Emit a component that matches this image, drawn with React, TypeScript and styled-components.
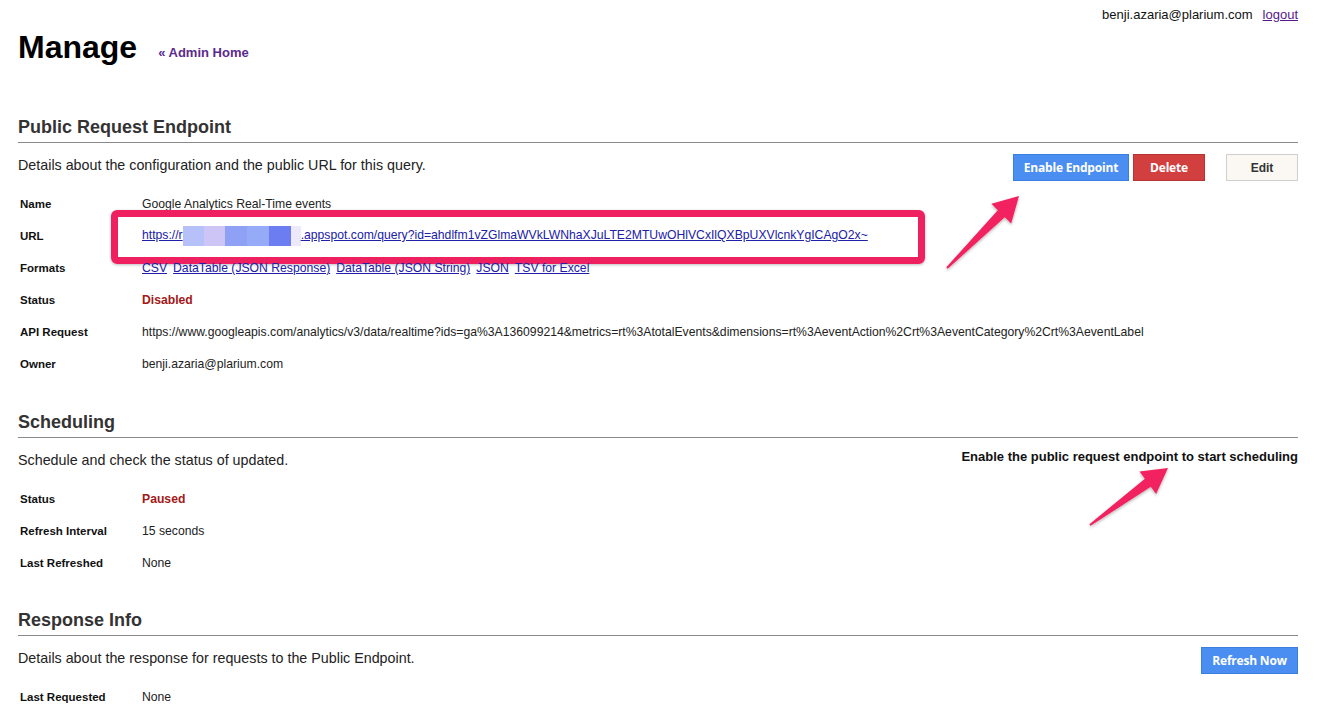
import React from "react";
import styled, { createGlobalStyle } from "styled-components";

const GlobalStyle = createGlobalStyle`
  *, *::before, *::after {
    box-sizing: border-box;
  }

  body {
    margin: 0;
    background: #fff;
    color: #222;
    font-family: "Liberation Sans", Arial, sans-serif;
  }
`;

const Page = styled.div`
  position: relative;
  width: 1324px;
  min-height: 708px;
  padding: 0 26px 0 18px;
  overflow: hidden;
`;

const TopBar = styled.div`
  display: flex;
  justify-content: flex-end;
  align-items: center;
  gap: 10px;
  height: 29px;
  font-size: 13px;
  color: #111;
`;

const VisitedLink = styled.a`
  color: #551a8b;
  text-decoration: underline;
`;

const TitleRow = styled.div`
  display: flex;
  align-items: baseline;
  gap: 21px;
`;

const PageTitle = styled.h1`
  margin: 0;
  font-size: 32px;
  line-height: 36px;
  font-weight: bold;
  color: #000;
`;

const AdminLink = styled.a`
  position: relative;
  top: -1px;
  color: #5b2a8e;
  font-size: 13px;
  font-weight: bold;
  text-decoration: none;
`;

const Section = styled.section<{ $top: number }>`
  margin-top: ${(p) => p.$top}px;
`;

const SectionTitle = styled.h2`
  margin: 0;
  font-size: 18px;
  line-height: 22px;
  font-weight: bold;
  color: #333;
  padding-bottom: 4px;
  border-bottom: 1px solid #8a8a8a;
`;

const IntroRow = styled.div`
  display: flex;
  align-items: flex-start;
  justify-content: space-between;
  min-height: 27px;
  margin-top: 11px;
`;

const Intro = styled.p`
  margin: 0;
  font-size: 14.3px;
  line-height: 22px;
  color: #222;
`;

const Hint = styled.p`
  margin: 0;
  font-size: 13px;
  line-height: 16px;
  font-weight: bold;
  color: #111;
`;

const Actions = styled.div`
  display: flex;
  align-items: center;
`;

const Button = styled.button<{ $kind: "primary" | "danger" | "plain"; $w: number; $gap?: number }>`
  width: ${(p) => p.$w}px;
  height: 27px;
  margin-left: ${(p) => p.$gap ?? 0}px;
  padding: 0;
  font-family: ${(p) =>
    p.$kind === "plain" ? `"Liberation Sans", Arial, sans-serif` : `"Open Sans", sans-serif`};
  font-size: 12px;
  font-weight: bold;
  letter-spacing: ${(p) => (p.$kind === "plain" ? "0" : "-0.2px")};
  cursor: pointer;
  color: ${(p) => (p.$kind === "plain" ? "#333" : "#fff")};
  background: ${(p) =>
    p.$kind === "primary" ? "#4b8ef1" : p.$kind === "danger" ? "#d23f3f" : "#fbf8f4"};
  border: 1px solid
    ${(p) => (p.$kind === "primary" ? "#3c7de0" : p.$kind === "danger" ? "#b83333" : "#cfcfcf")};
  border-radius: 0;
`;

const Fields = styled.dl`
  display: grid;
  grid-template-columns: 122px 1fr;
  grid-auto-rows: 32px;
  margin: 7px 0 0;
  padding-left: 2px;
`;

const Label = styled.dt`
  display: flex;
  align-items: center;
  font-size: 11.5px;
  font-weight: bold;
  color: #111;
`;

const Value = styled.dd<{ $tone?: "alert" }>`
  position: relative;
  display: flex;
  align-items: center;
  gap: 6px;
  margin: 0;
  font-size: 12.2px;
  white-space: nowrap;
  color: ${(p) => (p.$tone === "alert" ? "#a31919" : "#222")};
  font-weight: ${(p) => (p.$tone === "alert" ? "bold" : "normal")};
`;

const TextLink = styled.a`
  color: #2020a8;
  text-decoration: underline;
`;

const Blur = styled.span<{ $c: string; $w: number }>`
  display: inline-block;
  width: ${(p) => p.$w}px;
  height: 20px;
  vertical-align: middle;
  background: ${(p) => p.$c};
`;

const Highlight = styled.div`
  position: absolute;
  left: -31px;
  top: -10px;
  width: 814px;
  height: 54px;
  border: 7px solid #ef2060;
  border-radius: 6px;
  box-shadow: 0 1px 3px rgba(0, 0, 0, 0.25);
  pointer-events: none;
`;

const Arrows = styled.svg`
  position: absolute;
  left: 0;
  top: 0;
  pointer-events: none;
`;

const blurBlocks = [
  { c: "#b5c1f8", w: 21 },
  { c: "#cdc5f5", w: 21 },
  { c: "#8fa1f5", w: 22 },
  { c: "#95abf8", w: 22 },
  { c: "#6c7df1", w: 22 },
  { c: "#ede9fa", w: 10 },
];

const App: React.FC = () => {
  return (
    <>
      <GlobalStyle />
      <Page>
        <TopBar>
          <span>benji.azaria@plarium.com</span>
          <VisitedLink href="#">logout</VisitedLink>
        </TopBar>
        <TitleRow>
          <PageTitle>Manage</PageTitle>
          <AdminLink href="#">« Admin Home</AdminLink>
        </TitleRow>

        <Section $top={51}>
          <SectionTitle>Public Request Endpoint</SectionTitle>
          <IntroRow>
            <Intro>Details about the configuration and the public URL for this query.</Intro>
            <Actions>
              <Button $kind="primary" $w={116}>Enable Endpoint</Button>
              <Button $kind="danger" $w={72} $gap={4}>Delete</Button>
              <Button $kind="plain" $w={72} $gap={21}>Edit</Button>
            </Actions>
          </IntroRow>
          <Fields>
            <Label>Name</Label>
            <Value>Google Analytics Real-Time events</Value>
            <Label>URL</Label>
            <Value>
              <TextLink href="#">
                https://r
                {blurBlocks.map((b, i) => (
                  <Blur key={i} $c={b.c} $w={b.w} />
                ))}
                .appspot.com/query?id=ahdlfm1vZGlmaWVkLWNhaXJuLTE2MTUwOHlVCxIlQXBpUXVlcnkYgICAgO2x~
              </TextLink>
              <Highlight />
            </Value>
            <Label>Formats</Label>
            <Value>
              <TextLink href="#">CSV</TextLink>
              <TextLink href="#">DataTable (JSON Response)</TextLink>
              <TextLink href="#">DataTable (JSON String)</TextLink>
              <TextLink href="#">JSON</TextLink>
              <TextLink href="#">TSV for Excel</TextLink>
            </Value>
            <Label>Status</Label>
            <Value $tone="alert">Disabled</Value>
            <Label>API Request</Label>
            <Value>
              https://www.googleapis.com/analytics/v3/data/realtime?ids=ga%3A136099214&amp;metrics=rt%3AtotalEvents&amp;dimensions=rt%3AeventAction%2Crt%3AeventCategory%2Crt%3AeventLabel
            </Value>
            <Label>Owner</Label>
            <Value>benji.azaria@plarium.com</Value>
          </Fields>
        </Section>

        <Section $top={31}>
          <SectionTitle>Scheduling</SectionTitle>
          <IntroRow>
            <Intro>Schedule and check the status of updated.</Intro>
            <Hint>Enable the public request endpoint to start scheduling</Hint>
          </IntroRow>
          <Fields>
            <Label>Status</Label>
            <Value $tone="alert">Paused</Value>
            <Label>Refresh Interval</Label>
            <Value>15 seconds</Value>
            <Label>Last Refreshed</Label>
            <Value>None</Value>
          </Fields>
        </Section>

        <Section $top={30}>
          <SectionTitle>Response Info</SectionTitle>
          <IntroRow>
            <Intro>Details about the response for requests to the Public Endpoint.</Intro>
            <Actions>
              <Button $kind="primary" $w={97}>Refresh Now</Button>
            </Actions>
          </IntroRow>
          <Fields>
            <Label>Last Requested</Label>
            <Value>None</Value>
          </Fields>
        </Section>

        <Arrows width="1324" height="708" viewBox="0 0 1324 708">
          <defs>
            <filter id="arrowShadow" x="-20%" y="-20%" width="140%" height="140%">
              <feDropShadow dx="0" dy="1.5" stdDeviation="1.5" floodColor="#000" floodOpacity="0.3" />
            </filter>
          </defs>
          <g fill="#f1245e" filter="url(#arrowShadow)">
            <polygon points="946.3,267.3 997.8,210.2 991.4,203.8 1019,196 1011.2,223.6 1004.8,217.2 947.7,268.7" />
            <polygon points="1089.4,524.2 1144.9,478.7 1139.5,471.5 1168,468 1156.1,494 1150.8,486.8 1090.6,525.8" />
          </g>
        </Arrows>
      </Page>
    </>
  );
};

export default App;
